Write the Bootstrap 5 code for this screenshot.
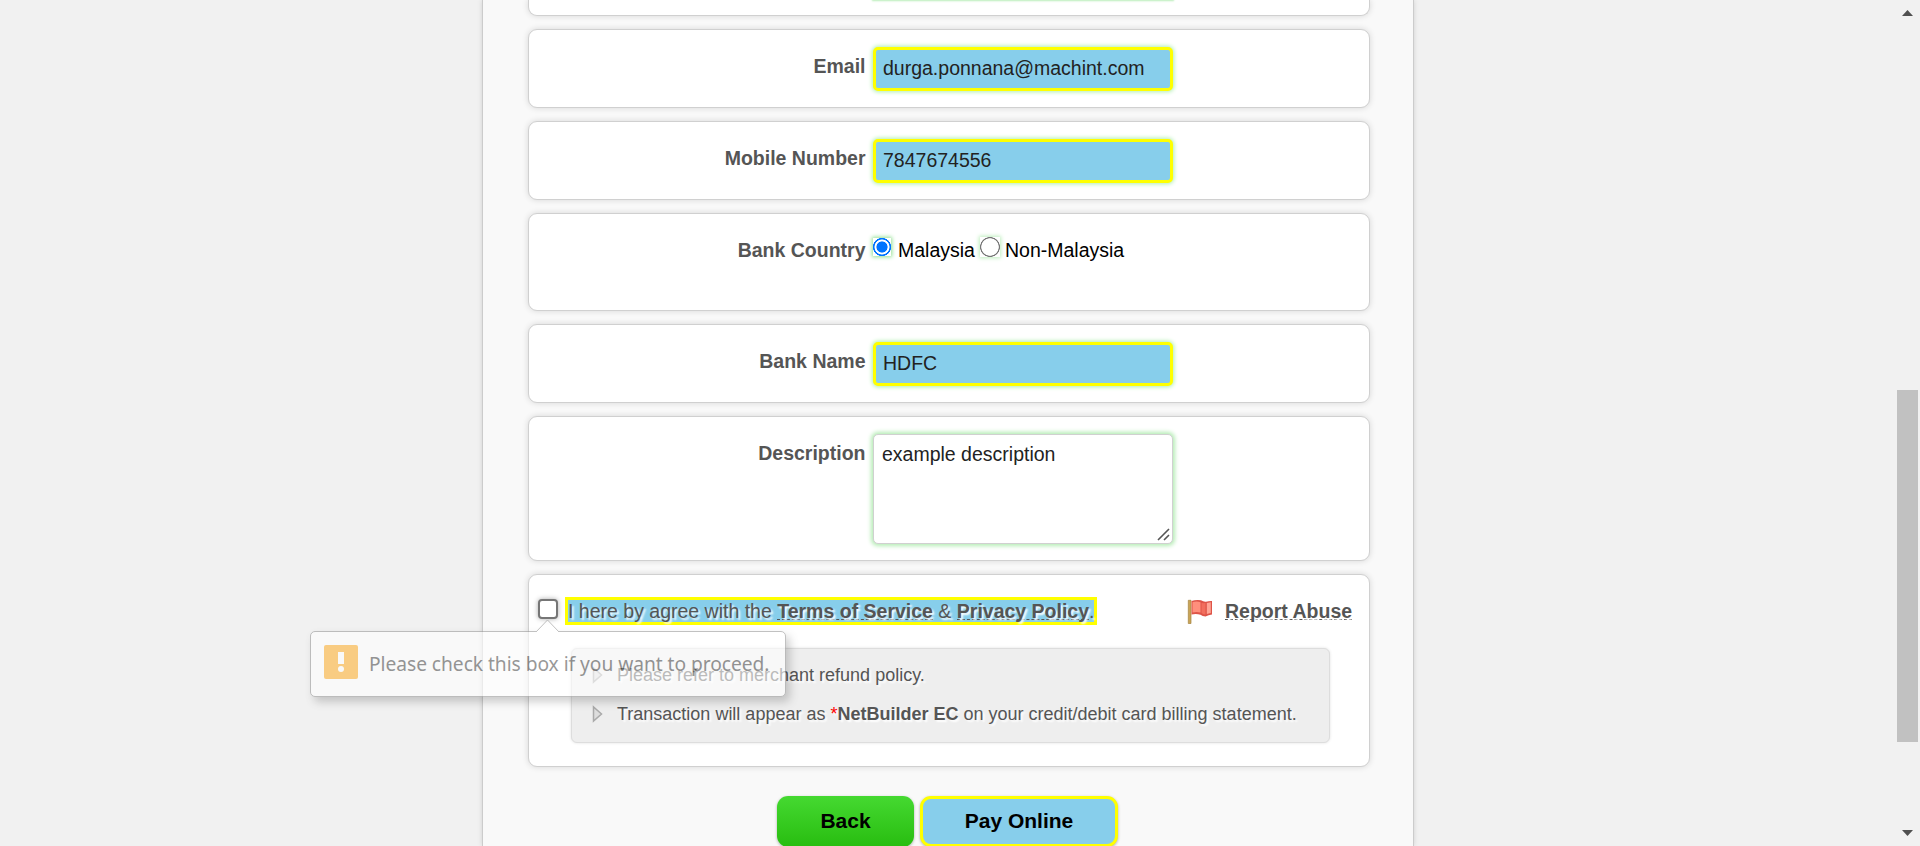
<!DOCTYPE html>
<html lang="en">
<head>
<meta charset="utf-8">
<title>Payment</title>
<link href="https://cdn.jsdelivr.net/npm/bootstrap@5.3.0/dist/css/bootstrap.min.css" rel="stylesheet">
<style>
html,body{height:846px;overflow:hidden}
body{background:#f1f1f1;font-family:"Liberation Sans",Arial,sans-serif;font-size:19.5px;line-height:24px;color:#000}
.main-area{padding-left:482px}
.sheet{width:932px;height:846px;background:#f9f9f9;border:solid #ccc;border-width:0 1px;box-shadow:0 0 5px rgba(0,0,0,.13);padding:0 43px 0 45px;overflow:hidden}
.panel{background:#fff;border:1px solid #d0d0d0;border-radius:9px;box-shadow:0 0 6px rgba(0,0,0,.14);margin-bottom:13px;flex:none}
.panel-cut{height:16px;border-top:0;border-radius:0 0 9px 9px}
.cut-glow{width:300px;height:0;margin-left:344px;box-shadow:0 0 2px 1px #b5ecb5}
.line-row{height:79px;padding-top:17px}
.row-radio{height:98px}
.row-area{height:145px}
.row-agree{height:193px}
.lbl{width:336.500px;margin-right:7.500px;padding-top:7px;text-align:right;font-weight:700;color:#555}
.fld{width:300px;height:44px;padding:0 7px 2px 7px;border:3px solid #ff0;border-radius:5px;background:#87ceeb;color:#222;font-size:19.5px;line-height:24px;box-shadow:0 0 4px 1px #b0eeb0;outline:0}
.area{display:block;height:110px;padding:7px 8px;background:#fff;border:1px solid #d0d0d0;box-shadow:0 0 4px 2px #b4ecb4;resize:none}
.grip{position:absolute;right:3px;bottom:3px}
.dot{appearance:none;width:18px;height:18px;flex:none;margin:7px 0 0;background:radial-gradient(circle,#0075ff 0 5.2px,#fff 5.9px 7.2px,#0075ff 7.8px 8.8px,#fff 9.3px);box-shadow:0 0 4px 1px #90df90}
.dot-off{width:20px;height:20px;margin:6px 0 0 5px;background:radial-gradient(circle,#fff 0 8.4px,#767676 9px 9.6px,#fff 10.2px);box-shadow:0 0 4px 1px #bdeebd}
.opt{padding-top:7px}
.opt-first{margin-left:7px}
.opt-last{margin-left:5px}
.soft{color:#555;text-shadow:2px 2px 2px #fff}
.chk{appearance:none;width:20px;height:20px;flex:none;border:2px solid #767676;border-radius:4px;background:#fff;box-shadow:0 0 5px #aaa;margin:0}
.agree{height:28px;line-height:22px;border:3px solid #ff0;background:#87ceeb;white-space:nowrap;width:532px}
.soft b{border-bottom:1px dashed #555;display:inline-block;line-height:15px}
.row-agree .agree-line{height:50px;padding:24px 0 0 9px}
.row-agree .agree{margin:-2px 0 0 7px;flex:none}
.flag{margin:0 0 0 90px;flex:none}
.abuse{margin:0 0 0 12px;white-space:nowrap;font-weight:700}
.btns{margin:16px 0 0 249px;gap:6px}
.notes{margin:23px 0 0 42px;width:759px;height:95px;background:#eee;border:1px solid #ddd;border-radius:6px;box-shadow:0 0 3px rgba(0,0,0,.12);font-size:18px;padding:7px 0 0 20px}
.notes p{margin:0;height:39px;line-height:39px;white-space:nowrap}
.notes svg{margin:-1px 14px 0 0;flex:none}
.star{color:red}
.b-btn{height:51px;border:0;border-radius:11px;font-size:21px;font-weight:700;line-height:48px;padding:0 0 2px;color:#000;text-align:center;box-shadow:0 1px 3px rgba(0,0,0,.3)}
.b-back{width:137px;background:linear-gradient(#45d931,#28bd10)}
.b-pay{width:198px;border:3px solid #ff0;background:#87ceeb;line-height:42px}
.tip{position:absolute;left:310px;top:631px;width:476px;height:66px;opacity:.6;background:#fff;border:1px solid #999;border-radius:5px;box-shadow:4px 5px 8px rgba(0,0,0,.3);padding-left:13px;color:#555;white-space:nowrap}
.tip-arrow{position:absolute;left:225px;top:-13px}
.tip-icon{margin-top:-4px}
.tip-text{margin-left:11px;font-family:"Noto Sans",sans-serif;font-size:19.2px;letter-spacing:-.04px}
.sbar{width:25px;height:846px;background:#f1f1f1;padding:10px 0 10px}
.thumb{width:21px;height:352px;background:#c1c1c1;margin-top:374px}
</style>
</head>
<body>
<div class="d-flex justify-content-between">
 <main class="main-area">
  <div class="sheet d-flex flex-column">
   <section class="panel panel-cut"><div class="cut-glow"></div></section>
   <section class="panel line-row d-flex align-items-start"><label class="lbl">Email</label><input class="fld" value="durga.ponnana@machint.com"></section>
   <section class="panel line-row d-flex align-items-start"><label class="lbl">Mobile Number</label><input class="fld" value="7847674556"></section>
   <section class="panel line-row row-radio d-flex align-items-start"><label class="lbl">Bank Country</label><input type="radio" name="country" class="dot" checked><span class="opt opt-first">Malaysia</span><input type="radio" name="country" class="dot dot-off"><span class="opt opt-last">Non-Malaysia</span></section>
   <section class="panel line-row d-flex align-items-start"><label class="lbl">Bank Name</label><input class="fld" value="HDFC"></section>
   <section class="panel line-row row-area d-flex align-items-start"><label class="lbl">Description</label>
    <div class="position-relative"><textarea class="fld area">example description</textarea><svg class="grip" width="13" height="13" viewBox="0 0 13 13"><path d="M1 12L12 1M7 12l5-5" stroke="#555" stroke-width="1.600" fill="none"/></svg></div></section>
   <section class="panel row-agree">
    <div class="agree-line d-flex align-items-start">
     <input type="checkbox" class="chk">
     <div class="agree soft">I here by agree with the <b>Terms of Service</b> &amp; <b>Privacy Policy</b>.</div>
     <svg class="flag" width="26" height="26" viewBox="0 0 26 26"><path d="M1.300 1.300h2.700v23.200H1.300z" fill="#c9a556" stroke="#a5823f" stroke-width=".7"/><path d="M4.500 2Q9 .5 14 1.300q2.500 1.700 5 1.400 3-.8 6-.7V15.500q-3.500.3-6.500 2-3-.3-5-1.800Q9 14.500 4.500 15.500z" fill="#de5448"/><path d="M5.500 3.200q4-1.400 8 0v10.300q-4-1.200-8 0z" fill="#ff8f7c"/><path d="M14.500 4q4 .5 4-.5v12Q16.500 15.500 14.500 14z" fill="#f26e5d"/><path d="M19.800 4l4-.8v10.800l-4 1z" fill="#ffa595"/></svg>
     <div class="soft abuse"><b>Report Abuse</b></div>
    </div>
    <div class="notes soft">
     <p class="d-flex align-items-center"><svg width="11" height="18" viewBox="0 0 11 18"><path d="M1.500 2v14L9.500 9z" fill="#ddd" stroke="#aaa" stroke-width="1.500"/></svg><span>Please refer to merchant refund policy.</span></p>
     <p class="d-flex align-items-center"><svg width="11" height="18" viewBox="0 0 11 18"><path d="M1.500 2v14L9.500 9z" fill="#ddd" stroke="#aaa" stroke-width="1.500"/></svg><span>Transaction will appear as <span class="star">*</span><strong>NetBuilder EC</strong> on your credit/debit card billing statement.</span></p>
    </div>
   </section>
   <div class="d-flex btns"><button class="b-btn b-back">Back</button><button class="b-btn b-pay">Pay Online</button></div>
  </div>
 </main>
 <aside class="sbar d-flex flex-column align-items-center">
  <svg width="11" height="6" viewBox="0 0 11 6"><path d="M0 6L5.500 0 11 6z" fill="#505050"/></svg>
  <div class="thumb"></div>
  <svg class="mt-auto" width="11" height="6" viewBox="0 0 11 6"><path d="M0 0L5.500 6 11 0z" fill="#505050"/></svg>
 </aside>
</div>
<div class="tip d-flex align-items-center">
 <svg class="tip-arrow" width="23" height="13" viewBox="0 0 23 13"><path d="M0 13L11.500 1 23 13" fill="#fff" stroke="#999"/></svg>
 <svg class="tip-icon" width="34" height="34" viewBox="0 0 34 34"><rect width="34" height="34" rx="2" fill="#ffb53a"/><path d="M14 7h6v12h-6z" fill="#fff"/><circle cx="17" cy="24" r="3" fill="#fff"/></svg>
 <span class="tip-text">Please check this box if you want to proceed.</span>
</div>
<script src="https://cdn.jsdelivr.net/npm/bootstrap@5.3.0/dist/js/bootstrap.bundle.min.js"></script>
</body>
</html>
